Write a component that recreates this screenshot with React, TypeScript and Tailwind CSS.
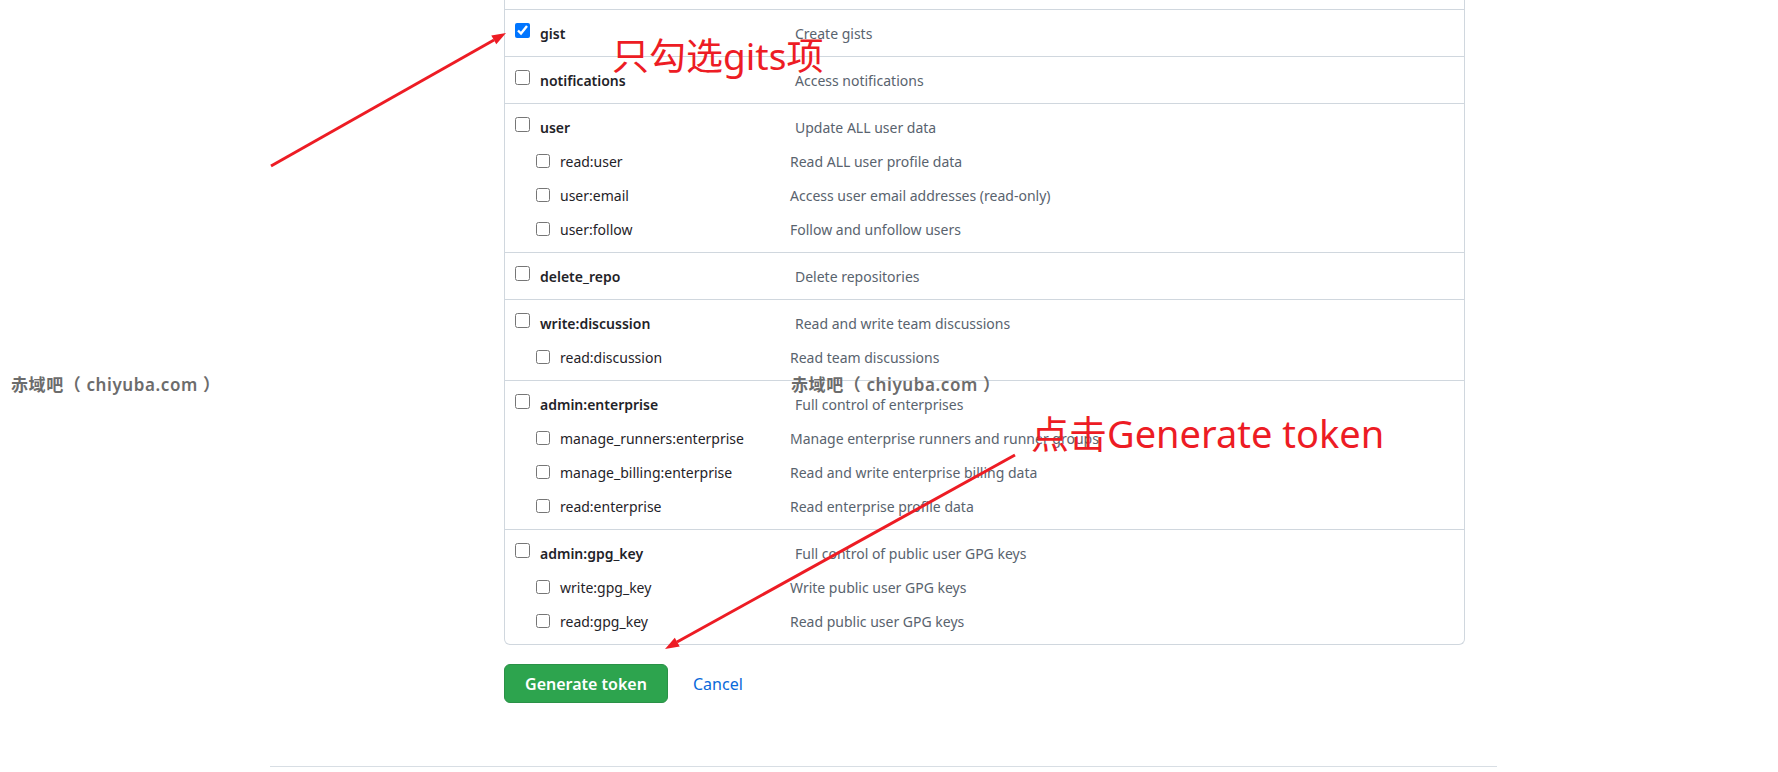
import React from "react";

type Sub = [string, string];
type Group = { name: string; desc: string; checked?: boolean; subs?: Sub[] };

const groups: Group[] = [
  { name: "gist", desc: "Create gists", checked: true },
  { name: "notifications", desc: "Access notifications" },
  {
    name: "user",
    desc: "Update ALL user data",
    subs: [
      ["read:user", "Read ALL user profile data"],
      ["user:email", "Access user email addresses (read-only)"],
      ["user:follow", "Follow and unfollow users"],
    ],
  },
  { name: "delete_repo", desc: "Delete repositories" },
  {
    name: "write:discussion",
    desc: "Read and write team discussions",
    subs: [["read:discussion", "Read team discussions"]],
  },
  {
    name: "admin:enterprise",
    desc: "Full control of enterprises",
    subs: [
      ["manage_runners:enterprise", "Manage enterprise runners and runner groups"],
      ["manage_billing:enterprise", "Read and write enterprise billing data"],
      ["read:enterprise", "Read enterprise profile data"],
    ],
  },
  {
    name: "admin:gpg_key",
    desc: "Full control of public user GPG keys",
    subs: [
      ["write:gpg_key", "Write public user GPG keys"],
      ["read:gpg_key", "Read public user GPG keys"],
    ],
  },
];

function GroupBlock({ g }: { g: Group }) {
  return (
    <div className="border-t border-[#d0d7de] py-[6px]">
      <div className="flex h-[34px] items-center pl-[10px]">
        <input
          type="checkbox"
          readOnly
          checked={!!g.checked}
          className="m-0 h-[15px] w-[15px] shrink-0 -translate-y-[3px] accent-[#0075ff]"
        />
        <span className="ml-[10px] w-[255px] shrink-0 font-semibold text-[#1f2328]">{g.name}</span>
        <span className="text-[#59636e]">{g.desc}</span>
      </div>
      {(g.subs || []).map(([n, d]) => (
        <div key={n} className="flex h-[34px] items-center pl-[31px]">
          <input
            type="checkbox"
            readOnly
            checked={false}
            className="m-0 h-[14px] w-[14px] shrink-0 accent-[#0075ff]"
          />
          <span className="ml-[10px] w-[230px] shrink-0 text-[#1f2328]">{n}</span>
          <span className="text-[#59636e]">{d}</span>
        </div>
      ))}
    </div>
  );
}

function Watermark({ className }: { className: string }) {
  return (
    <div
      className={
        "absolute whitespace-nowrap text-[17px] font-semibold leading-none tracking-[0.6px] text-[#6c6c6c] " +
        className
      }
      style={{ fontFamily: '"Noto Sans", "Noto Sans CJK SC", sans-serif' }}
    >
      赤域吧（ chiyuba.com ）
    </div>
  );
}

export default function App() {
  return (
    <div
      className="relative h-[772px] w-[1778px] overflow-hidden bg-white text-[14px]"
      style={{ fontFamily: '"Noto Sans", "Noto Sans CJK SC", sans-serif' }}
    >
      <div className="ml-[270px] flex h-[772px] w-[1227px] flex-col">
        <div className="flex flex-1">
          <div className="w-[234px] shrink-0" />
          <div className="w-[961px] shrink-0">
            <div className="rounded-b-md border-x border-b border-[#d0d7de]">
              <div className="h-[9px]" />
              {groups.map((g) => (
                <GroupBlock key={g.name} g={g} />
              ))}
            </div>
            <div className="mt-[19px] flex items-center">
              <button className="flex h-[39px] w-[164px] items-center justify-center rounded-md border border-[#2a9147] bg-[#2da44e] text-[16px] font-semibold text-white">
                Generate token
              </button>
              <a className="ml-[25px] text-[16px] text-[#0969da]">Cancel</a>
            </div>
          </div>
        </div>
        <div className="mb-[5px] border-t border-[#d8dee4]" />
      </div>

      <Watermark className="left-[11px] top-[376px]" />
      <Watermark className="left-[791px] top-[376px]" />

      <div
        className="absolute left-[612px] top-[37px] whitespace-nowrap text-[37px] leading-none text-[#ed1c24]"
        style={{ fontFamily: '"Noto Sans", "Noto Sans CJK SC", sans-serif' }}
      >
        只勾选gits项
      </div>
      <div
        className="absolute left-[1031px] top-[414px] whitespace-nowrap text-[38px] leading-none text-[#ed1c24]"
        style={{ fontFamily: '"Noto Sans", "Noto Sans CJK SC", sans-serif' }}
      >
        点击Generate token
      </div>

      <svg className="pointer-events-none absolute left-0 top-0" width="1778" height="772">
        <line x1="271" y1="166" x2="494" y2="40" stroke="#ed1c24" strokeWidth="3" />
        <polygon points="506,33 496.3,44.3 491.3,35.5" fill="#ed1c24" />
        <line x1="1015" y1="455" x2="677" y2="642" stroke="#ed1c24" strokeWidth="3" />
        <polygon points="665,649 679.7,646.6 674.8,637.8" fill="#ed1c24" />
      </svg>
    </div>
  );
}
